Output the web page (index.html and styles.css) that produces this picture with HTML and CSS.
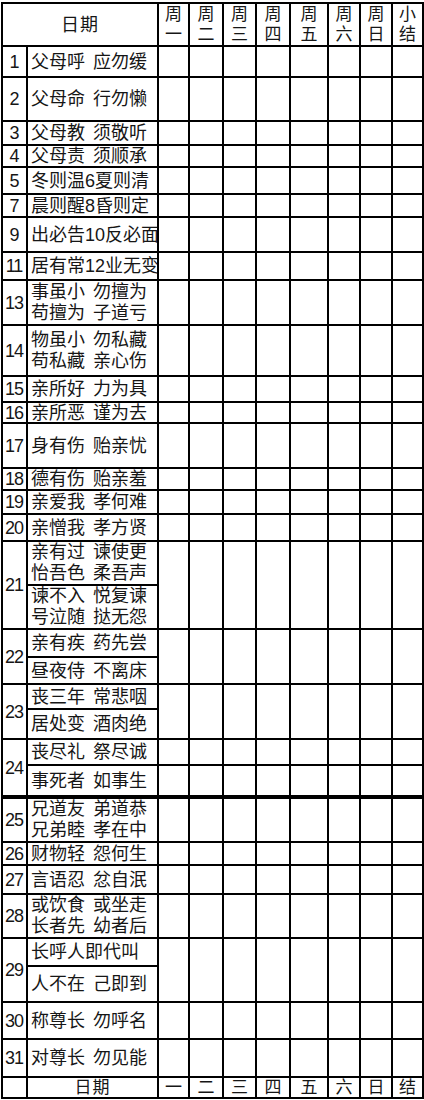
FILE: index.html
```html
<!DOCTYPE html>
<html lang="zh-CN">
<head>
<meta charset="utf-8">
<title>弟子规 每周记录表</title>
<link rel="stylesheet" href="styles.css">
</head>
<body>
<div class="sheet">
<table class="grid">
<colgroup>
<col class="c-num"><col class="c-text"><col class="c-31"><col class="c-34"><col class="c-33"><col class="c-34"><col class="c-38"><col class="c-32"><col class="c-32"><col class="c-31">
</colgroup>
<thead>
<tr class="h43">
<th colspan="2" class="date">日期</th>
<th class="day">周<br>一</th><th class="day">周<br>二</th><th class="day">周<br>三</th><th class="day">周<br>四</th><th class="day">周<br>五</th><th class="day">周<br>六</th><th class="day">周<br>日</th><th class="day">小<br>结</th>
</tr>
</thead>
<tbody>
<tr class="h31"><td class="num">1</td><td class="txt">父母呼 应勿缓</td><td></td><td></td><td></td><td></td><td></td><td></td><td></td><td></td></tr>
<tr class="h44"><td class="num">2</td><td class="txt">父母命 行勿懒</td><td></td><td></td><td></td><td></td><td></td><td></td><td></td><td></td></tr>
<tr class="h24"><td class="num">3</td><td class="txt">父母教 须敬听</td><td></td><td></td><td></td><td></td><td></td><td></td><td></td><td></td></tr>
<tr class="h22"><td class="num">4</td><td class="txt">父母责 须顺承</td><td></td><td></td><td></td><td></td><td></td><td></td><td></td><td></td></tr>
<tr class="h27"><td class="num">5</td><td class="txt">冬则温6夏则清</td><td></td><td></td><td></td><td></td><td></td><td></td><td></td><td></td></tr>
<tr class="h23"><td class="num">7</td><td class="txt">晨则醒8昏则定</td><td></td><td></td><td></td><td></td><td></td><td></td><td></td><td></td></tr>
<tr class="h35"><td class="num">9</td><td class="txt">出必告10反必面</td><td></td><td></td><td></td><td></td><td></td><td></td><td></td><td></td></tr>
<tr class="h28"><td class="num">11</td><td class="txt">居有常12业无变</td><td></td><td></td><td></td><td></td><td></td><td></td><td></td><td></td></tr>
<tr class="h45"><td class="num">13</td><td class="txt two">事虽小 勿擅为<br>苟擅为 子道亏</td><td></td><td></td><td></td><td></td><td></td><td></td><td></td><td></td></tr>
<tr class="h51"><td class="num">14</td><td class="txt two">物虽小 勿私藏<br>苟私藏 亲心伤</td><td></td><td></td><td></td><td></td><td></td><td></td><td></td><td></td></tr>
<tr class="h26"><td class="num">15</td><td class="txt">亲所好 力为具</td><td></td><td></td><td></td><td></td><td></td><td></td><td></td><td></td></tr>
<tr class="h21"><td class="num">16</td><td class="txt">亲所恶 谨为去</td><td></td><td></td><td></td><td></td><td></td><td></td><td></td><td></td></tr>
<tr class="h45"><td class="num">17</td><td class="txt">身有伤 贻亲忧</td><td></td><td></td><td></td><td></td><td></td><td></td><td></td><td></td></tr>
<tr class="h22"><td class="num">18</td><td class="txt">德有伤 贻亲羞</td><td></td><td></td><td></td><td></td><td></td><td></td><td></td><td></td></tr>
<tr class="h24"><td class="num">19</td><td class="txt">亲爱我 孝何难</td><td></td><td></td><td></td><td></td><td></td><td></td><td></td><td></td></tr>
<tr class="h27"><td class="num">20</td><td class="txt">亲憎我 孝方贤</td><td></td><td></td><td></td><td></td><td></td><td></td><td></td><td></td></tr>
<tr class="h44"><td class="num" rowspan="2">21</td><td class="txt two">亲有过 谏使更<br>怡吾色 柔吾声</td><td rowspan="2"></td><td rowspan="2"></td><td rowspan="2"></td><td rowspan="2"></td><td rowspan="2"></td><td rowspan="2"></td><td rowspan="2"></td><td rowspan="2"></td></tr>
<tr class="h44"><td class="txt two">谏不入 悦复谏<br>号泣随 挞无怨</td></tr>
<tr class="h28"><td class="num" rowspan="2">22</td><td class="txt">亲有疾 药先尝</td><td rowspan="2"></td><td rowspan="2"></td><td rowspan="2"></td><td rowspan="2"></td><td rowspan="2"></td><td rowspan="2"></td><td rowspan="2"></td><td rowspan="2"></td></tr>
<tr class="h27"><td class="txt">昼夜侍 不离床</td></tr>
<tr class="h25"><td class="num" rowspan="2">23</td><td class="txt">丧三年 常悲咽</td><td rowspan="2"></td><td rowspan="2"></td><td rowspan="2"></td><td rowspan="2"></td><td rowspan="2"></td><td rowspan="2"></td><td rowspan="2"></td><td rowspan="2"></td></tr>
<tr class="h30"><td class="txt">居处变 酒肉绝</td></tr>
<tr class="h26"><td class="num" rowspan="2">24</td><td class="txt">丧尽礼 祭尽诚</td><td></td><td></td><td></td><td></td><td></td><td></td><td></td><td></td></tr>
<tr class="h32"><td class="txt">事死者 如事生</td><td></td><td></td><td></td><td></td><td></td><td></td><td></td><td></td></tr>
<tr class="h45 sep"><td class="num">25</td><td class="txt two">兄道友 弟道恭<br>兄弟睦 孝在中</td><td></td><td></td><td></td><td></td><td></td><td></td><td></td><td></td></tr>
<tr class="h23"><td class="num">26</td><td class="txt">财物轻 怨何生</td><td></td><td></td><td></td><td></td><td></td><td></td><td></td><td></td></tr>
<tr class="h29"><td class="num">27</td><td class="txt">言语忍 忿自泯</td><td></td><td></td><td></td><td></td><td></td><td></td><td></td><td></td></tr>
<tr class="h44"><td class="num">28</td><td class="txt two">或饮食 或坐走<br>长者先 幼者后</td><td></td><td></td><td></td><td></td><td></td><td></td><td></td><td></td></tr>
<tr class="h28"><td class="num" rowspan="2">29</td><td class="txt">长呼人即代叫</td><td rowspan="2"></td><td rowspan="2"></td><td rowspan="2"></td><td rowspan="2"></td><td rowspan="2"></td><td rowspan="2"></td><td rowspan="2"></td><td rowspan="2"></td></tr>
<tr class="h36"><td class="txt">人不在 己即到</td></tr>
<tr class="h37"><td class="num">30</td><td class="txt">称尊长 勿呼名</td><td></td><td></td><td></td><td></td><td></td><td></td><td></td><td></td></tr>
<tr class="h38"><td class="num">31</td><td class="txt">对尊长 勿见能</td><td></td><td></td><td></td><td></td><td></td><td></td><td></td><td></td></tr>
</tbody>
<tfoot>
<tr class="h21 foot"><td class="num"></td><td class="fdate">日期</td><td>一</td><td>二</td><td>三</td><td>四</td><td>五</td><td>六</td><td>日</td><td>结</td></tr>
</tfoot>
</table>
</div>
</body>
</html>
```
FILE: styles.css
```css
html, body {
  margin: 0;
  padding: 0;
  background: #ffffff;
}

body {
  font-family: "Liberation Sans", "Noto Sans CJK SC", sans-serif;
  color: #161616;
}

.sheet {
  padding: 2px 0 0 1px;
}

.grid {
  border-collapse: collapse;
  table-layout: fixed;
  width: 421px;
}

.c-num { width: 25px; }
.c-text { width: 131px; }
.c-31 { width: 31px; }
.c-32 { width: 32px; }
.c-33 { width: 33px; }
.c-34 { width: 34px; }
.c-38 { width: 38px; }

.grid th,
.grid td {
  border: 2px solid #000;
  padding: 0;
  font-weight: normal;
  font-size: 18px;
  line-height: 18px;
  text-align: center;
  vertical-align: middle;
  overflow: hidden;
  white-space: nowrap;
}

.grid .day {
  font-size: 17px;
  line-height: 20px;
  padding-top: 1px;
}

.grid .date {
  font-size: 18px;
  letter-spacing: 1px;
}

.grid .num {
  font-size: 18px;
  letter-spacing: -1px;
  padding-right: 1px;
}

.grid .txt {
  text-align: left;
  padding-left: 3px;
  word-spacing: 3px;
}

.grid .two {
  line-height: 21px;
}

.grid .fdate {
  letter-spacing: 1px;
}

.foot td {
  font-size: 17px;
  line-height: 17px;
}

.sep > td {
  border-top-width: 4px;
}

.h21 { height: 21px; }
.h22 { height: 22px; }
.h23 { height: 23px; }
.h24 { height: 24px; }
.h25 { height: 25px; }
.h26 { height: 26px; }
.h27 { height: 27px; }
.h28 { height: 28px; }
.h29 { height: 29px; }
.h30 { height: 30px; }
.h31 { height: 31px; }
.h32 { height: 32px; }
.h35 { height: 35px; }
.h36 { height: 36px; }
.h37 { height: 37px; }
.h38 { height: 38px; }
.h43 { height: 43px; }
.h44 { height: 44px; }
.h45 { height: 45px; }
.h51 { height: 51px; }
```
